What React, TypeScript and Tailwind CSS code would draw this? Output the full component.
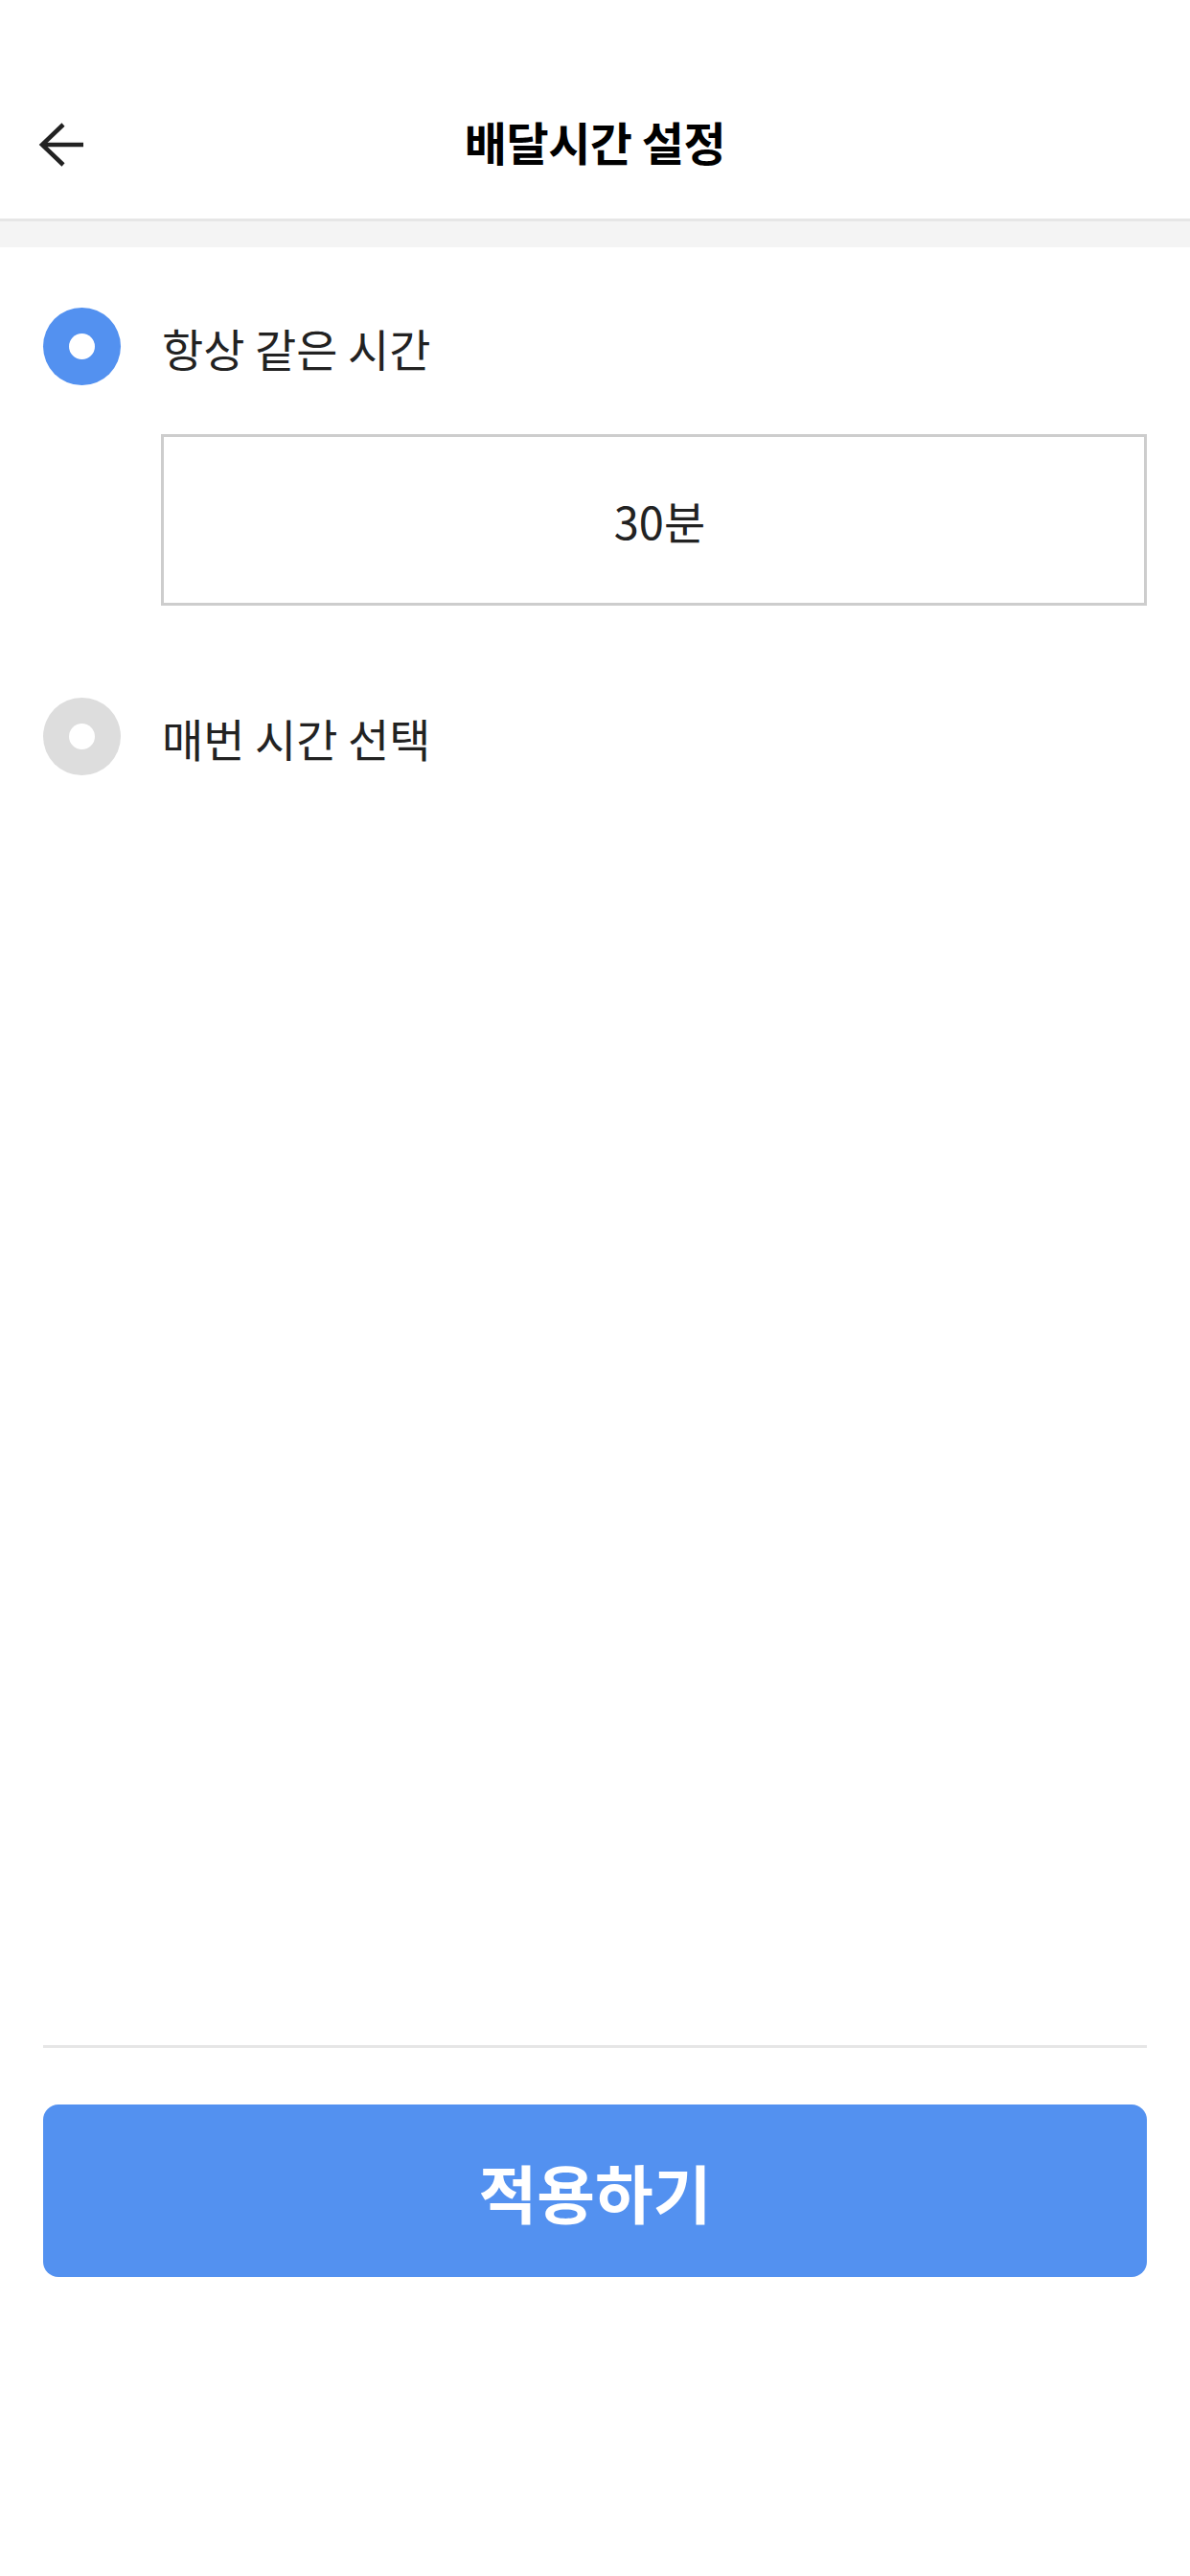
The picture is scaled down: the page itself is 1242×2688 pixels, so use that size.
import { useState } from 'react'

const font = "font-['Noto_Sans_CJK_KR','Noto_Sans',sans-serif]"

function BackArrow() {
  return (
    <svg width="48" height="46" viewBox="0 0 48 46" fill="none" stroke="#222222" strokeWidth="4.5" strokeLinecap="butt" strokeLinejoin="miter">
      <path d="M4 23H47" />
      <path d="M26 2L4 23L26 44" />
    </svg>
  )
}

function Radio({ checked }: { checked: boolean }) {
  return (
    <span
      className={`flex items-center justify-center w-[81px] h-[81px] rounded-full shrink-0 ${
        checked ? 'bg-[#5391f0]' : 'bg-[#dddddd]'
      }`}
    >
      <span className="w-[27px] h-[27px] rounded-full bg-white" />
    </span>
  )
}

export default function App() {
  const [mode, setMode] = useState<'fixed' | 'each'>('fixed')

  return (
    <div className={`w-full h-[2688px] flex flex-col bg-white ${font}`}>
      {/* 헤더 */}
      <header className="pt-[72px] border-b-[3px] border-[#e6e6e6]">
        <div className="relative h-[156px] flex items-center justify-center">
          <button className="absolute left-[40px] top-[56px]">
            <BackArrow />
          </button>
          <h1 className="text-[48px] font-bold text-black leading-none tracking-[-0.5px] pb-[6px]">배달시간 설정</h1>
        </div>
      </header>
      <div className="h-[27px] bg-[#f4f4f4]" />

      {/* 옵션 */}
      <main className="flex-1 px-[45px] pt-[63px]">
        <button className="flex items-center gap-[43px]" onClick={() => setMode('fixed')}>
          <Radio checked={mode === 'fixed'} />
          <span className="text-[47px] text-[#222222] leading-none pt-[2px]">항상 같은 시간</span>
        </button>

        <div className="ml-[123px] mt-[51px] h-[179px] border-[3px] border-[#cdcdcd] flex items-center justify-center">
          <span className="text-[47px] text-[#222222] leading-none pl-[12px]">30분</span>
        </div>

        <button className="mt-[96px] flex items-center gap-[43px]" onClick={() => setMode('each')}>
          <Radio checked={mode === 'each'} />
          <span className="text-[47px] text-[#222222] leading-none pt-[2px]">매번 시간 선택</span>
        </button>
      </main>

      {/* 하단 */}
      <footer className="px-[45px] pb-[312px]">
        <div className="h-[3px] bg-[#e6e6e6]" />
        <button className="mt-[59px] w-full h-[180px] rounded-[16px] bg-[#5391f0] flex items-center justify-center">
          <span className="text-[66px] font-bold text-white leading-none">적용하기</span>
        </button>
      </footer>
    </div>
  )
}
